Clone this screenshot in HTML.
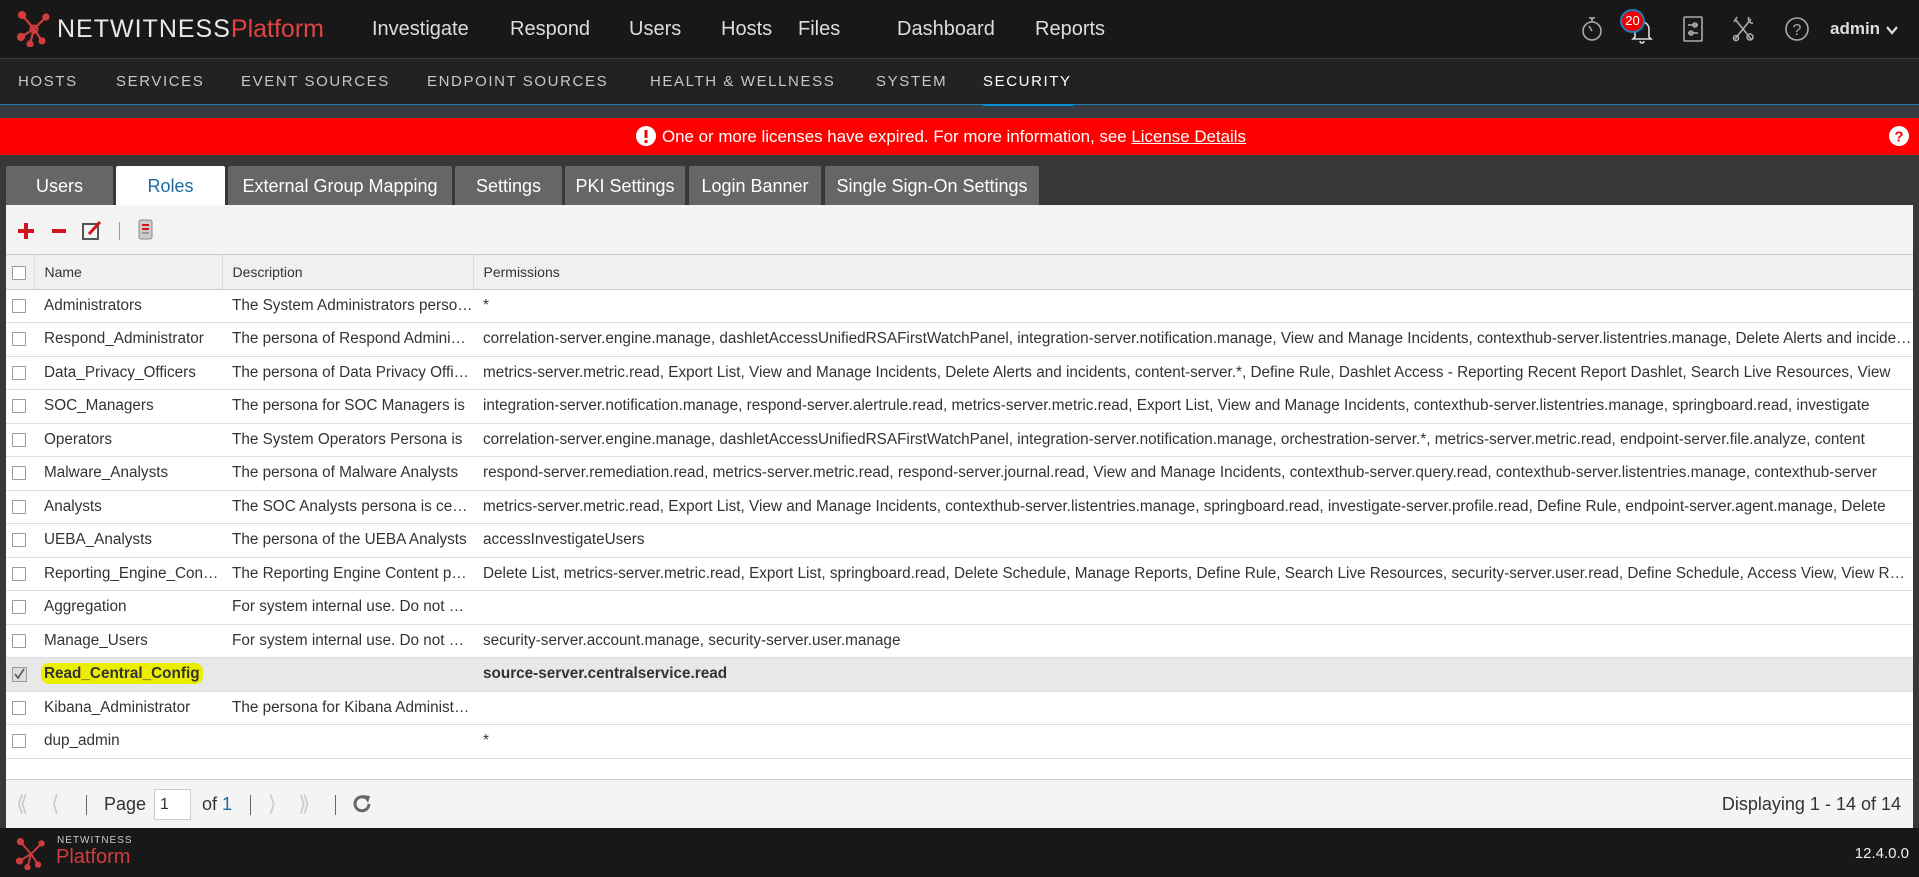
<!DOCTYPE html>
<html><head><meta charset="utf-8">
<style>
*{margin:0;padding:0;box-sizing:border-box}
body{width:1919px;height:877px;overflow:hidden;background:#383838;font-family:"Liberation Sans",sans-serif;position:relative}
.top{position:absolute;left:0;top:0;width:1919px;height:58px;background:#181818}
.logo{position:absolute;left:17px;top:11px;height:36px;display:flex;align-items:center}
.logo .nw{color:#e8e8e8;font-size:25px;letter-spacing:1px;margin-left:6px}
.logo .pf{color:#e04444;font-size:25px}
.nav{position:absolute;top:18px;color:#ddd;font-size:20px}
.sub{position:absolute;left:0;top:58px;width:1919px;height:47px;background:#222;border-top:1px solid #3a3a3a;border-bottom:1px solid #1a7fb5}
.sub span{position:absolute;top:14px;color:#c8c8c8;font-size:15px;letter-spacing:1.6px}
.strip{position:absolute;left:0;top:106px;width:1919px;height:12px;background:#353b41}
.banner{position:absolute;left:0;top:118px;width:1919px;height:37px;background:#f00;color:#fff;font-size:16.9px}
.tab{position:absolute;top:166px;height:39px;background:#666;color:#fff;font-size:18px;text-align:center;line-height:40px;border-radius:2px 2px 0 0}
.panel{position:absolute;left:6px;top:205px;width:1907px;height:623px;background:#fff}
.toolbar{position:absolute;left:0;top:0;width:1907px;height:50px;background:#f4f4f4;border-bottom:1px solid #ccc}
table{position:absolute;left:0;top:50px;width:1907px;border-collapse:collapse;table-layout:fixed}
td,th{height:33.5px;border-bottom:1px solid #ddd;font-size:15.3px;color:#333;white-space:nowrap;overflow:hidden;text-overflow:ellipsis;padding-left:10px;text-align:left;font-weight:normal}
th{background:#f0f0f0;font-size:14px;border-right:1px solid #ddd;border-bottom:1px solid #ccc;height:34px}
td.c,th.c{padding-left:6px}
.cb{display:inline-block;width:14px;height:14px;border:1px solid #999;background:#fff;vertical-align:middle;border-radius:1px}
tr.sel td{background:#e8e8e8;font-weight:bold}
.hl{background:#ecee00;border-radius:8px;padding:2px 3px;margin-left:-3px}
.pager{position:absolute;left:0;top:574px;width:1907px;height:49px;background:#f4f4f4;border-top:1px solid #ccc;font-size:18px;color:#333}
.bottom{position:absolute;left:0;top:828px;width:1919px;height:49px;background:#181818}
</style></head><body>
<div class="top">
 <div class="logo">
  <svg width="34" height="36" viewBox="0 0 34 36"><g stroke="#d23c3c" stroke-width="2.2" fill="#d23c3c"><line x1="5" y1="4" x2="17" y2="18"/><line x1="29" y1="6" x2="17" y2="18"/><line x1="4" y1="26" x2="17" y2="18"/><line x1="17" y1="18" x2="25" y2="30"/><line x1="17" y1="18" x2="13" y2="33"/><circle cx="5" cy="4" r="3"/><circle cx="29" cy="6" r="2.5"/><circle cx="4" cy="26" r="3"/><circle cx="25" cy="30" r="2.5"/><circle cx="13" cy="33" r="2.5"/><circle cx="17" cy="18" r="3.5" fill="none"/></g></svg>
  <span class="nw">NETWITNESS</span><span class="pf">Platform</span>
 </div>
 <span class="nav" style="left:372px">Investigate</span>
 <span class="nav" style="left:510px">Respond</span>
 <span class="nav" style="left:629px">Users</span>
 <span class="nav" style="left:721px">Hosts</span>
 <span class="nav" style="left:798px">Files</span>
 <span class="nav" style="left:897px">Dashboard</span>
 <span class="nav" style="left:1035px">Reports</span>
 <svg style="position:absolute;left:1581px;top:15px" width="22" height="28" viewBox="0 0 22 28"><g fill="none" stroke="#aaa" stroke-width="1.6"><circle cx="11" cy="16" r="9"/><line x1="8" y1="3" x2="14" y2="3"/><line x1="11" y1="3" x2="11" y2="7"/><line x1="11" y1="16" x2="8" y2="11"/></g></svg>
 <svg style="position:absolute;left:1630px;top:18px" width="24" height="26" viewBox="0 0 24 26"><path d="M5 19 V11 a7 7 0 0 1 14 0 V19 L21 21 H3 Z M10 23 a2 2 0 0 0 4 0" fill="none" stroke="#ddd" stroke-width="1.6"/></svg>
 <div style="position:absolute;left:1620px;top:9px;width:25px;height:24px;border-radius:50%;background:#e00;border:2px solid #1b7fc0;color:#fff;font-size:13px;text-align:center;line-height:20px">20</div>
 <svg style="position:absolute;left:1682px;top:15px" width="22" height="28" viewBox="0 0 22 28"><g fill="none" stroke="#aaa" stroke-width="1.6"><rect x="2" y="2" width="18" height="24" rx="1"/><line x1="6" y1="10" x2="16" y2="10"/><circle cx="13" cy="10" r="2"/><line x1="6" y1="18" x2="16" y2="18"/><circle cx="9" cy="18" r="2"/></g></svg>
 <svg style="position:absolute;left:1731px;top:15px" width="24" height="28" viewBox="0 0 24 28"><g fill="none" stroke="#aaa" stroke-width="1.6"><path d="M4 4 L20 24 M6 2 L3 7 M20 4 L4 24 M18 2 a4 4 0 0 0 4 6"/><circle cx="19" cy="22" r="3"/><circle cx="5" cy="23" r="2.5"/></g></svg>
 <svg style="position:absolute;left:1784px;top:16px" width="26" height="26" viewBox="0 0 26 26"><circle cx="13" cy="13" r="11" fill="none" stroke="#aaa" stroke-width="1.6"/><text x="13" y="19" font-size="16" fill="#aaa" text-anchor="middle" font-family="Liberation Sans">?</text></svg>
 <span style="position:absolute;left:1830px;top:19px;color:#ddd;font-size:17px;font-weight:bold">admin</span>
 <svg style="position:absolute;left:1885px;top:24px" width="14" height="12" viewBox="0 0 14 12"><path d="M2 3 L7 9 L12 3" fill="none" stroke="#ddd" stroke-width="2.2"/></svg>
</div>
<div class="sub">
 <span style="left:18px">HOSTS</span><span style="left:116px">SERVICES</span><span style="left:241px">EVENT SOURCES</span><span style="left:427px">ENDPOINT SOURCES</span><span style="left:650px">HEALTH &amp; WELLNESS</span><span style="left:876px">SYSTEM</span><span style="left:983px;color:#fff">SECURITY</span>
 <div style="position:absolute;left:983px;top:45px;width:90px;height:4px;background:#0092d8"></div>
</div>
<div class="strip"></div>
<div class="banner">
 <svg style="position:absolute;left:636px;top:8px" width="20" height="20" viewBox="0 0 20 20"><circle cx="10" cy="10" r="10" fill="#fff"/><rect x="8.5" y="4" width="3" height="8" fill="#f00"/><rect x="8.5" y="14" width="3" height="3" fill="#f00"/></svg>
 <span style="position:absolute;left:662px;top:9px">One or more licenses have expired. For more information, see <u>License Details</u></span>
 <svg style="position:absolute;left:1889px;top:8px" width="20" height="20" viewBox="0 0 20 20"><circle cx="10" cy="10" r="10" fill="#fff"/><text x="10" y="15.5" font-size="15" font-weight="bold" fill="#f00" text-anchor="middle" font-family="Liberation Sans">?</text></svg>
</div>
<div class="tab" style="left:6px;width:107px">Users</div>
<div class="tab" style="left:116px;width:109px;background:#fff;color:#1a6ca0;height:40px">Roles</div>
<div class="tab" style="left:228px;width:224px">External Group Mapping</div>
<div class="tab" style="left:455px;width:107px">Settings</div>
<div class="tab" style="left:565px;width:120px">PKI Settings</div>
<div class="tab" style="left:689px;width:132px">Login Banner</div>
<div class="tab" style="left:825px;width:214px">Single Sign-On Settings</div>
<div class="panel">
 <div class="toolbar">
  <svg style="position:absolute;left:11px;top:17px" width="18" height="18"><rect x="7" y="1" width="4" height="16" fill="#d0161c"/><rect x="1" y="7" width="16" height="4" fill="#d0161c"/></svg>
  <svg style="position:absolute;left:45px;top:17px" width="16" height="18"><rect x="1" y="7" width="14" height="4" fill="#d0161c"/></svg>
  <svg style="position:absolute;left:75px;top:14px" width="22" height="22"><rect x="2" y="5" width="15" height="15" fill="none" stroke="#555" stroke-width="2"/><path d="M8 15 L19 3" stroke="#d0161c" stroke-width="3"/></svg>
  <div style="position:absolute;left:113px;top:17px;width:1px;height:18px;background:#999"></div>
  <svg style="position:absolute;left:129px;top:13px" width="20" height="24"><rect x="4" y="2" width="13" height="19" rx="2" fill="#ccc" stroke="#888"/><rect x="7" y="6" width="7" height="2" fill="#d0161c"/><rect x="7" y="10" width="7" height="2" fill="#d0161c"/><rect x="7" y="14" width="7" height="2" fill="#999"/></svg>
 </div>
 <table>
  <colgroup><col style="width:28px"><col style="width:188px"><col style="width:251px"><col></colgroup>
  <tr><th class="c"><span class="cb"></span></th><th>Name</th><th>Description</th><th style="border-right:none">Permissions</th></tr>
  <tr><td class="c"><span class="cb"></span></td><td>Administrators</td><td>The System Administrators persona...</td><td>*</td></tr>
  <tr><td class="c"><span class="cb"></span></td><td>Respond_Administrator</td><td>The persona of Respond Administrators</td><td>correlation-server.engine.manage, dashletAccessUnifiedRSAFirstWatchPanel, integration-server.notification.manage, View and Manage Incidents, contexthub-server.listentries.manage, Delete Alerts and incidents</td></tr>
  <tr><td class="c"><span class="cb"></span></td><td>Data_Privacy_Officers</td><td>The persona of Data Privacy Officers</td><td>metrics-server.metric.read, Export List, View and Manage Incidents, Delete Alerts and incidents, content-server.*, Define Rule, Dashlet Access - Reporting Recent Report Dashlet, Search Live Resources, View</td></tr>
  <tr><td class="c"><span class="cb"></span></td><td>SOC_Managers</td><td>The persona for SOC Managers is</td><td>integration-server.notification.manage, respond-server.alertrule.read, metrics-server.metric.read, Export List, View and Manage Incidents, contexthub-server.listentries.manage, springboard.read, investigate</td></tr>
  <tr><td class="c"><span class="cb"></span></td><td>Operators</td><td>The System Operators Persona is</td><td>correlation-server.engine.manage, dashletAccessUnifiedRSAFirstWatchPanel, integration-server.notification.manage, orchestration-server.*, metrics-server.metric.read, endpoint-server.file.analyze, content</td></tr>
  <tr><td class="c"><span class="cb"></span></td><td>Malware_Analysts</td><td>The persona of Malware Analysts</td><td>respond-server.remediation.read, metrics-server.metric.read, respond-server.journal.read, View and Manage Incidents, contexthub-server.query.read, contexthub-server.listentries.manage, contexthub-server</td></tr>
  <tr><td class="c"><span class="cb"></span></td><td>Analysts</td><td>The SOC Analysts persona is centered</td><td>metrics-server.metric.read, Export List, View and Manage Incidents, contexthub-server.listentries.manage, springboard.read, investigate-server.profile.read, Define Rule, endpoint-server.agent.manage, Delete</td></tr>
  <tr><td class="c"><span class="cb"></span></td><td>UEBA_Analysts</td><td>The persona of the UEBA Analysts</td><td>accessInvestigateUsers</td></tr>
  <tr><td class="c"><span class="cb"></span></td><td>Reporting_Engine_Content</td><td>The Reporting Engine Content persona</td><td>Delete List, metrics-server.metric.read, Export List, springboard.read, Delete Schedule, Manage Reports, Define Rule, Search Live Resources, security-server.user.read, Define Schedule, Access View, View Reports</td></tr>
  <tr><td class="c"><span class="cb"></span></td><td>Aggregation</td><td>For system internal use. Do not modify</td><td></td></tr>
  <tr><td class="c"><span class="cb"></span></td><td>Manage_Users</td><td>For system internal use. Do not modify</td><td>security-server.account.manage, security-server.user.manage</td></tr>
  <tr class="sel"><td class="c"><svg width="15" height="15" style="vertical-align:middle"><rect x="0.5" y="0.5" width="14" height="14" fill="#ddd" stroke="#999"/><path d="M3 7 L6 11 L12 2" fill="none" stroke="#555" stroke-width="1.6"/></svg></td><td><span class="hl">Read_Central_Config</span></td><td></td><td>source-server.centralservice.read</td></tr>
  <tr><td class="c"><span class="cb"></span></td><td>Kibana_Administrator</td><td>The persona for Kibana Administrators</td><td></td></tr>
  <tr><td class="c"><span class="cb"></span></td><td>dup_admin</td><td></td><td>*</td></tr>
 </table>
 <div class="pager">
  <span style="position:absolute;left:10px;top:11px;color:#ccc;font-size:22px">&#x27EA;</span>
  <span style="position:absolute;left:45px;top:11px;color:#ccc;font-size:22px">&#x27E8;</span>
  <div style="position:absolute;left:80px;top:15px;width:1px;height:20px;background:#666"></div>
  <span style="position:absolute;left:98px;top:14px">Page</span>
  <div style="position:absolute;left:148px;top:9px;width:37px;height:31px;background:#fff;border:1px solid #ccc;font-size:16px;padding:6px 0 0 5px">1</div>
  <span style="position:absolute;left:196px;top:14px">of <span style="color:#1a6ca0">1</span></span>
  <div style="position:absolute;left:244px;top:15px;width:1px;height:20px;background:#666"></div>
  <span style="position:absolute;left:262px;top:11px;color:#ccc;font-size:22px">&#x27E9;</span>
  <span style="position:absolute;left:292px;top:11px;color:#ccc;font-size:22px">&#x27EB;</span>
  <div style="position:absolute;left:329px;top:15px;width:1px;height:20px;background:#666"></div>
  <svg style="position:absolute;left:345px;top:13px" width="22" height="22" viewBox="0 0 22 22"><path d="M18 11 A7 7 0 1 1 15 5" fill="none" stroke="#666" stroke-width="3"/><path d="M12 2 L19 3 L17 10 Z" fill="#666"/></svg>
  <span style="position:absolute;right:12px;top:14px">Displaying 1 - 14 of 14</span>
 </div>
</div>
<div class="bottom">
 <svg style="position:absolute;left:16px;top:10px" width="30" height="32" viewBox="0 0 34 36"><g stroke="#d23c3c" stroke-width="2.2" fill="#d23c3c"><line x1="5" y1="4" x2="17" y2="18"/><line x1="29" y1="6" x2="17" y2="18"/><line x1="4" y1="26" x2="17" y2="18"/><line x1="17" y1="18" x2="25" y2="30"/><line x1="17" y1="18" x2="13" y2="33"/><circle cx="5" cy="4" r="3"/><circle cx="29" cy="6" r="2.5"/><circle cx="4" cy="26" r="3"/><circle cx="25" cy="30" r="2.5"/><circle cx="13" cy="33" r="2.5"/></g></svg>
 <span style="position:absolute;left:57px;top:7px;color:#ccc;font-size:10px;letter-spacing:1px">NETWITNESS</span>
 <span style="position:absolute;left:56px;top:18px;color:#d23c3c;font-size:20px">Platform</span>
 <span style="position:absolute;right:10px;top:17px;color:#eee;font-size:15px">12.4.0.0</span>
</div>
</body></html>
